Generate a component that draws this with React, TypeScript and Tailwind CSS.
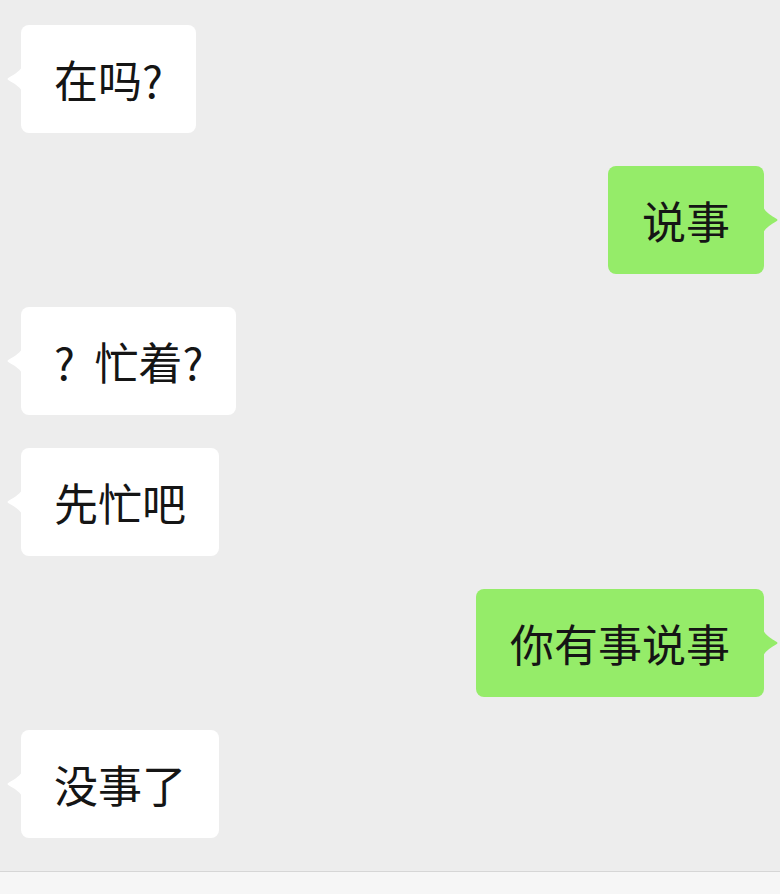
const messages = [
  { text: "在吗?", mine: false },
  { text: "说事", mine: true },
  { text: "?  忙着?", mine: false },
  { text: "先忙吧", mine: false },
  { text: "你有事说事", mine: true },
  { text: "没事了", mine: false },
];

function Tail({ mine }: { mine: boolean }) {
  if (mine) {
    return (
      <svg
        className="absolute right-[-14px] top-1/2 -translate-y-1/2"
        width="15"
        height="26"
        viewBox="0 0 15 26"
      >
        <path d="M0 0 C3 6 9 9 13 11.5 C15 12.6 15 13.4 13 14.5 C9 17 3 20 0 26 Z" fill="#95ec69" />
      </svg>
    );
  }
  return (
    <svg
      className="absolute left-[-14px] top-1/2 -translate-y-1/2"
      width="15"
      height="24"
      viewBox="0 0 15 24"
    >
      <path d="M15 0 C12 5 6 8 2 10.5 C0 11.5 0 12.5 2 13.5 C6 16 12 19 15 24 Z" fill="#ffffff" />
    </svg>
  );
}

function Bubble({ text, mine }: { text: string; mine: boolean }) {
  return (
    <div className={mine ? "flex justify-end pr-[16px]" : "flex justify-start pl-[21px]"}>
      <div
        className={
          mine
            ? "relative flex h-[108px] items-center rounded-[8px] bg-[#95ec69] px-[34px]"
            : "relative flex h-[108px] items-center rounded-[8px] bg-white px-[33px]"
        }
      >
        <Tail mine={mine} />
        <span className="whitespace-pre text-[44px] leading-none text-[#151515]">{text}</span>
      </div>
    </div>
  );
}

export default function App() {
  return (
    <div
      className="flex h-[894px] w-[780px] flex-col overflow-hidden bg-[#ededed]"
      style={{ fontFamily: '"Noto Sans CJK SC", "Noto Sans", sans-serif' }}
    >
      <div className="flex flex-1 flex-col gap-[33px] pt-[25px]">
        {messages.map((m, i) => (
          <Bubble key={i} text={m.text} mine={m.mine} />
        ))}
      </div>
      <div className="h-[23px] border-t border-[#d6d6d6] bg-[#f6f6f6]" />
    </div>
  );
}
